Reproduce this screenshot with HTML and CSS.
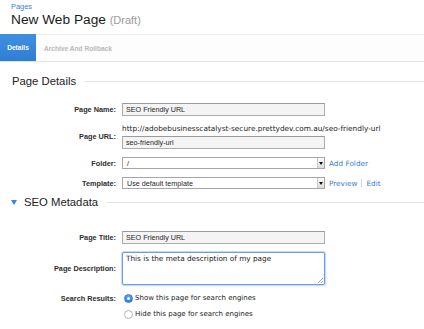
FILE: index.html
```html
<!DOCTYPE html>
<html lang="en">
<head>
<meta charset="utf-8">
<title>New Web Page</title>
<link rel="stylesheet" href="styles.css">
</head>
<body>
<div class="crumb"><a href="#" class="link">Pages</a></div>
<h1 class="title">New Web Page <span class="draft">(Draft)</span></h1>
<nav class="tabs">
  <span class="tab active">Details</span>
  <span class="tab">Archive And Rollback</span>
</nav>

<h2 class="section"><span class="section-text">Page Details</span></h2>

<div class="form">
  <div class="row row-name">
    <div class="label">Page Name:</div>
    <div class="ctrl"><div class="input">SEO Friendly URL</div></div>
  </div>
  <div class="row row-url">
    <div class="label">Page URL:</div>
    <div class="ctrl">
      <div class="url-text">http://adobebusinesscatalyst-secure.prettydev.com.au/seo-friendly-url</div>
      <div class="input">seo-friendly-url</div>
    </div>
  </div>
  <div class="row row-folder">
    <div class="label">Folder:</div>
    <div class="ctrl ctrl-inline">
      <div class="select"><span class="select-val">/</span><span class="select-btn"><svg width="4" height="3" viewBox="0 0 4 3"><path d="M0 0h4L2 3z" fill="#111"/></svg></span></div>
      <a href="#" class="link side">Add Folder</a>
    </div>
  </div>
  <div class="row row-template">
    <div class="label">Template:</div>
    <div class="ctrl ctrl-inline">
      <div class="select"><span class="select-val">Use default template</span><span class="select-btn"><svg width="4" height="3" viewBox="0 0 4 3"><path d="M0 0h4L2 3z" fill="#111"/></svg></span></div>
      <a href="#" class="link side">Preview</a><span class="divider"></span><a href="#" class="link">Edit</a>
    </div>
  </div>
</div>

<h2 class="section section-seo"><svg class="tri" width="6" height="5" viewBox="0 0 6 5"><path d="M0 0h6L3 5z" fill="#3b86d6"/></svg><span class="section-text">SEO Metadata</span></h2>

<div class="form">
  <div class="row row-ptitle">
    <div class="label">Page Title:</div>
    <div class="ctrl"><div class="input">SEO Friendly URL</div></div>
  </div>
  <div class="row row-desc">
    <div class="label">Page Description:</div>
    <div class="ctrl"><div class="textarea">This is the meta description of my page<svg class="grip" width="6" height="6" viewBox="0 0 6 6"><path d="M6 1L1 6M6 4L4 6" stroke="#999" stroke-width="0.8"/></svg></div></div>
  </div>
  <div class="row row-radio1">
    <div class="label">Search Results:</div>
    <div class="ctrl ctrl-inline"><span class="radio checked"></span><span class="radio-text">Show this page for search engines</span></div>
  </div>
  <div class="row row-radio2">
    <div class="label"></div>
    <div class="ctrl ctrl-inline"><span class="radio"></span><span class="radio-text">Hide this page for search engines</span></div>
  </div>
</div>
</body>
</html>
```

FILE: styles.css
```css
html, body {
  margin: 0;
  padding: 0;
  background: #fff;
}
body {
  font-family: "Liberation Sans", Arial, sans-serif;
  color: #222;
  width: 424px;
  height: 329px;
  overflow: hidden;
}
.link {
  color: #3a80d6;
  text-decoration: none;
}
.crumb {
  padding: 2px 0 0 11px;
  height: 9px;
  line-height: 9px;
  font-size: 7.4px;
}
.title {
  margin: 0;
  padding-left: 11px;
  font-size: 13.7px;
  line-height: 18px;
  font-weight: normal;
  color: #1a1a1a;
}
.draft {
  font-size: 11px;
  color: #9a9a9a;
}
.tabs {
  margin-top: 5px;
  display: flex;
  height: 26px;
  border-top: 1px solid #eeeeee;
  border-bottom: 1px solid #e4e4e4;
  background: #fdfdfd;
}
.tab {
  display: flex;
  align-items: center;
  font-size: 6.6px;
  font-weight: bold;
  color: #b8b8b8;
  padding-left: 8px;
}
.tab.active {
  width: 36px;
  padding: 0;
  justify-content: center;
  color: #fff;
  background: linear-gradient(#3f8fe0, #2f7ed4);
  margin-top: -1px;
  height: 27px;
}
.section {
  margin: 11px 0 0 0;
  display: flex;
  align-items: center;
  height: 16px;
  padding-left: 12px;
  font-weight: normal;
  font-size: 11.3px;
  color: #222;
}
.section::after {
  content: "";
  flex: 1;
  height: 1px;
  background: #e2e2e2;
  margin-left: 9px;
}
.section-seo {
  margin-top: 5px;
  padding-left: 11px;
}
.tri {
  margin-right: 7px;
}
.form {
  display: flex;
  flex-direction: column;
}
.row {
  display: flex;
  align-items: center;
}
.label {
  width: 116px;
  flex: none;
  text-align: right;
  font-weight: bold;
  font-size: 7.3px;
  color: #2e2e2e;
  margin-right: 6px;
}
.ctrl {
  display: flex;
  flex-direction: column;
}
.ctrl-inline {
  flex-direction: row;
  align-items: center;
}
.input {
  box-sizing: border-box;
  width: 203px;
  height: 13px;
  border: 1px solid #acacac;
  border-top-color: #9a9a9a;
  background: #f4f4f4;
  font-size: 7.2px;
  line-height: 11px;
  padding-left: 3px;
  color: #1e1e1e;
}
.url-text {
  font-family: "DejaVu Sans", sans-serif;
  font-size: 7.35px;
  line-height: 11px;
  height: 11px;
  margin-bottom: 2px;
  color: #222;
  white-space: nowrap;
}
.row-name { margin-top: 14px; }
.row-url { margin-top: 7px; }
.row-folder { margin-top: 8px; }
.row-template { margin-top: 8px; }
.row-ptitle { margin-top: 21px; }
.row-desc { margin-top: 8px; }
.row-radio1 { margin-top: 7px; height: 12px; }
.row-radio2 { margin-top: 4px; height: 12px; }
.select {
  box-sizing: border-box;
  width: 203px;
  height: 12px;
  border: 1px solid #a6a6a6;
  background: #fff;
  display: flex;
  align-items: center;
}
.select-val {
  flex: 1;
  font-size: 7.2px;
  padding-left: 4px;
  color: #1e1e1e;
}
.select-btn {
  width: 6px;
  height: 10px;
  border-left: 1px solid #c8c8c8;
  background: linear-gradient(#fbfbfb, #dcdcdc);
  display: flex;
  align-items: center;
  justify-content: center;
}
.side {
  margin-left: 4px;
}
.ctrl-inline .link {
  font-family: "DejaVu Sans", sans-serif;
  font-size: 7.3px;
}
.divider {
  width: 1px;
  height: 8px;
  background: #c9d9ec;
  margin: 0 4px;
}
.textarea {
  position: relative;
  box-sizing: border-box;
  width: 203px;
  height: 33px;
  border: 1px solid #6f9be6;
  border-radius: 2px;
  box-shadow: 0 0 1px 1px rgba(120, 165, 240, 0.45);
  background: #fff;
  font-family: "DejaVu Sans", sans-serif;
  font-size: 7.3px;
  line-height: 10px;
  padding: 1px 3px;
  color: #222;
}
.grip {
  position: absolute;
  right: 1px;
  bottom: 1px;
}
.radio {
  box-sizing: border-box;
  width: 9px;
  height: 9px;
  border-radius: 50%;
  border: 1px solid #b4b4b4;
  background: #fff;
  margin-left: 2px;
  margin-right: 2px;
  display: flex;
  align-items: center;
  justify-content: center;
}
.radio.checked {
  border-color: #2f78d0;
  background: linear-gradient(#5aa6f4, #2b7de4);
}
.radio.checked::after {
  content: "";
  width: 3px;
  height: 3px;
  border-radius: 50%;
  background: #fff;
}
.radio-text {
  font-family: "DejaVu Sans", sans-serif;
  font-size: 7px;
  color: #222;
}
```
